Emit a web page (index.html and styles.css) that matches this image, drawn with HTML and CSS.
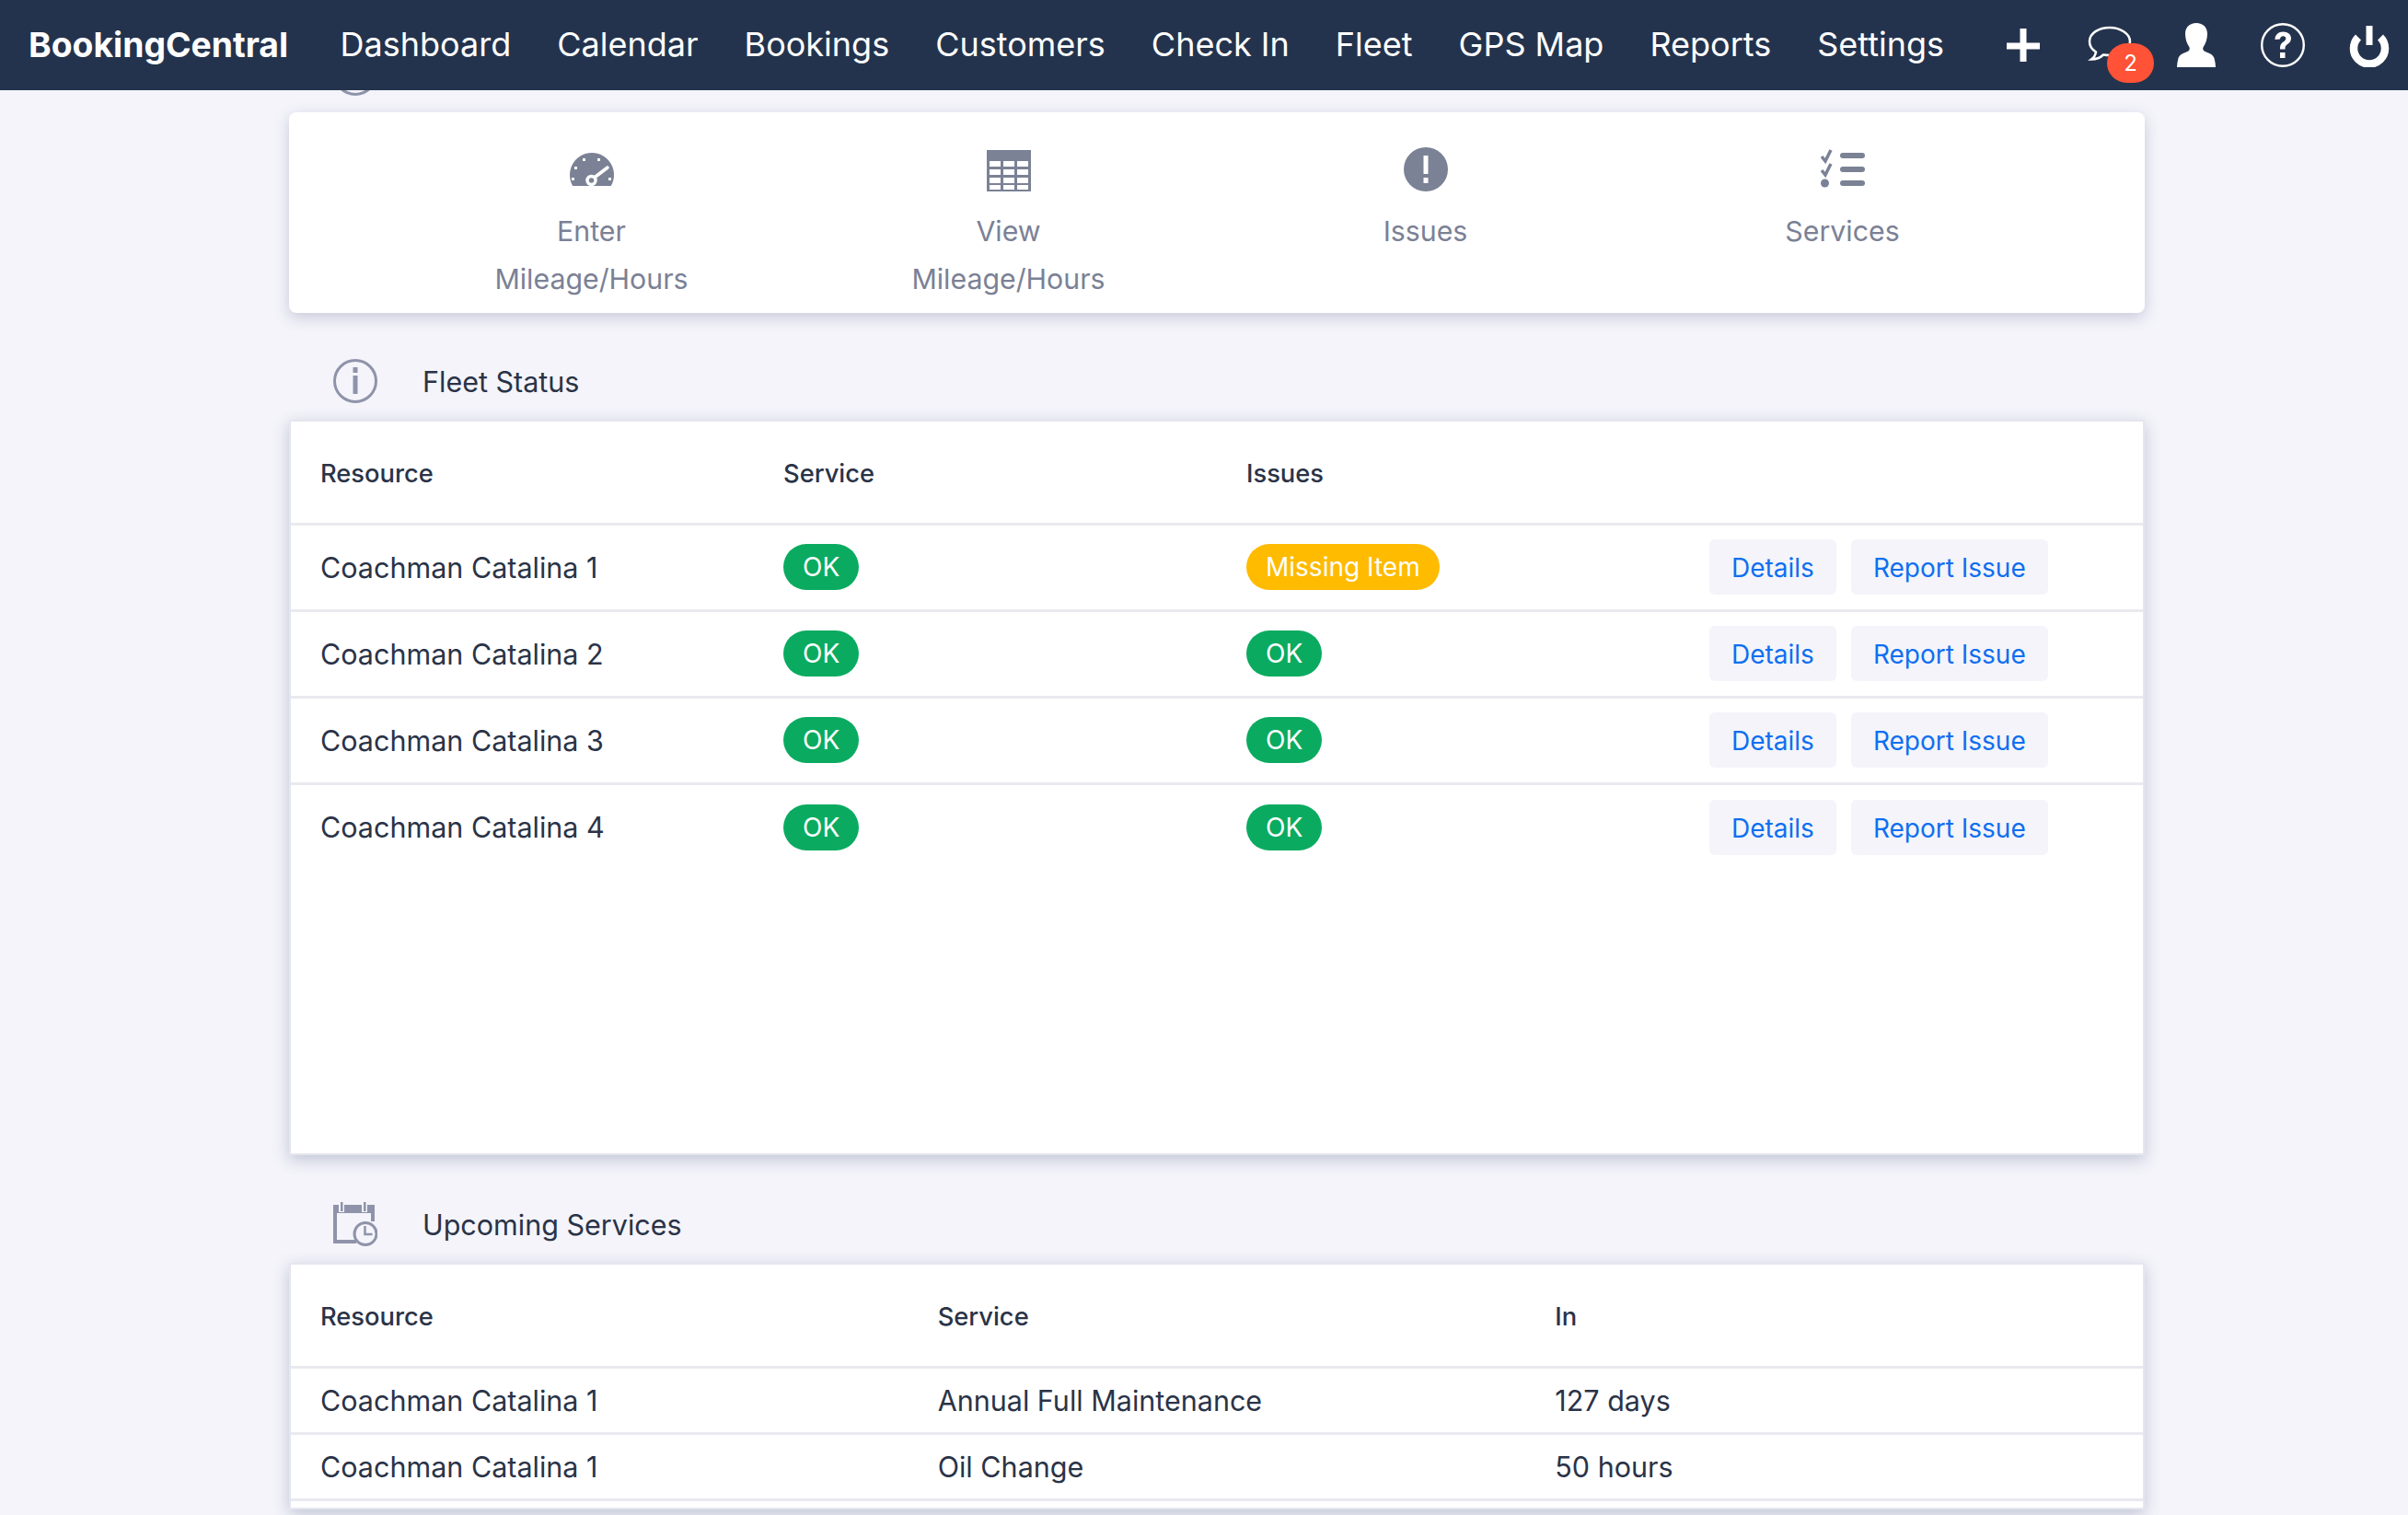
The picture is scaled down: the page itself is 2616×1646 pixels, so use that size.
FILE: index.html
```html
<!DOCTYPE html>
<html lang="en">
<head>
<meta charset="utf-8">
<title>BookingCentral</title>
<link rel="stylesheet" href="styles.css">
</head>
<body>
<nav class="topbar">
  <a class="brand">BookingCentral</a>
  <a class="nav-link">Dashboard</a>
  <a class="nav-link">Calendar</a>
  <a class="nav-link">Bookings</a>
  <a class="nav-link">Customers</a>
  <a class="nav-link">Check In</a>
  <a class="nav-link">Fleet</a>
  <a class="nav-link">GPS Map</a>
  <a class="nav-link">Reports</a>
  <a class="nav-link">Settings</a>
  <div class="nav-icons">
    <svg class="nav-icon" viewBox="0 0 48 48"><path d="M20.500 6h7v15.500H42v7H27.500V42h-7V28.500H6v-7h14.500z" fill="#fff"/></svg>
    <div class="chat">
      <svg class="nav-icon" viewBox="0 0 48 48"><path d="M24 5C12 5 2 11 2 20c0 5 3 9 7 11.500-.5 3-2 6-5 8 5 0 10-2 13-5 2 .4 4.500.5 7 .5 12 0 22-7 22-15S36 5 24 5z" fill="none" stroke="#fff" stroke-width="2.500"/></svg>
      <span class="chat-badge">2</span>
    </div>
    <svg class="nav-icon" viewBox="0 0 48 48"><path d="M24 0c7.500 0 12 5 12 11.500 0 6-1.800 11-4.300 14.500-.8 1.200-.7 3.500 1 4.500 5.500 2.500 9.800 3.500 11 8.500.8 3 1.200 6 1.300 9H3c.1-3 .5-6 1.300-9 1.200-5 5.500-6 11-8.500 1.700-1 1.800-3.300 1-4.500C13.800 22.500 12 17.500 12 11.500 12 5 16.500 0 24 0z" fill="#fff"/></svg>
    <svg class="nav-icon" viewBox="0 0 48 48"><circle cx="24" cy="24" r="22.800" fill="none" stroke="#fff" stroke-width="2.400"/><path d="M15.500 18c0-5.500 4-8.500 8.800-8.500 5.200 0 8.700 3 8.700 7.300 0 3-1.700 4.700-3.800 6.200-2 1.400-2.700 2.300-2.700 4.500v1h-5.500v-1.500c0-3.300 1.100-4.900 3.500-6.600 1.700-1.200 2.800-2.100 2.800-3.500 0-1.600-1.200-2.700-3-2.700-2 0-3.200 1.300-3.300 3.300z" fill="#fff"/><rect x="21" y="32" width="5.500" height="6" fill="#fff"/></svg>
    <svg class="nav-icon" viewBox="0 0 48 48"><path d="M12 15.500a17 17 0 1 0 24 0" fill="none" stroke="#fff" stroke-width="8.500" stroke-linecap="butt"/><rect x="20.500" y="3" width="7" height="21" fill="#fff"/></svg>
  </div>
</nav>

<main class="content">
  <div class="section-head">
    <svg class="section-icon" viewBox="0 0 48 48"><circle cx="24" cy="24" r="22.500" fill="none" stroke="#8f93aa" stroke-width="3"/></svg>
  </div>

  <section class="shortcuts">
    <a class="shortcut">
      <svg class="shortcut-icon" viewBox="0 0 48 48"><path d="M3.200 42A24 24 0 1 1 44.800 42z" fill="#7b8295"/><g fill="#fff"><rect x="14" y="12" width="3" height="3"/><rect x="30" y="12" width="3" height="3"/><rect x="5" y="21" width="3" height="3"/><rect x="2" y="33" width="3" height="3"/><rect x="42" y="33" width="3" height="3"/></g><path d="M24 35 L41 22" stroke="#fff" stroke-width="3.500" stroke-linecap="round"/><circle cx="23.500" cy="36" r="4.500" fill="#7b8295" stroke="#fff" stroke-width="3.500"/></svg>
      <span class="shortcut-label">Enter<br>Mileage/Hours</span>
    </a>
    <a class="shortcut">
      <svg class="shortcut-icon" viewBox="0 0 48 48"><rect y="3" width="48" height="45" fill="#7b8295"/><g fill="#fff"><rect x="3" y="15" width="12" height="6"/><rect x="18" y="15" width="12" height="6"/><rect x="33" y="15" width="12" height="6"/><rect x="3" y="24" width="12" height="6"/><rect x="18" y="24" width="12" height="6"/><rect x="33" y="24" width="12" height="6"/><rect x="3" y="33" width="12" height="6"/><rect x="18" y="33" width="12" height="6"/><rect x="33" y="33" width="12" height="6"/><rect x="3" y="41" width="12" height="5"/><rect x="18" y="41" width="12" height="5"/><rect x="33" y="41" width="12" height="5"/></g></svg>
      <span class="shortcut-label">View<br>Mileage/Hours</span>
    </a>
    <a class="shortcut">
      <svg class="shortcut-icon" viewBox="0 0 48 48"><circle cx="24" cy="24" r="24" fill="#7b8295"/><rect x="21.500" y="9" width="5" height="20" fill="#fff"/><rect x="21.500" y="33" width="5" height="6" fill="#fff"/></svg>
      <span class="shortcut-label">Issues</span>
    </a>
    <a class="shortcut">
      <svg class="shortcut-icon" viewBox="0 0 48 48"><g fill="#7b8295"><rect x="21" y="6" width="27" height="6" rx="3"/><rect x="21" y="21" width="27" height="6" rx="3"/><rect x="21" y="36" width="27" height="6" rx="3"/><circle cx="4.500" cy="39" r="4.500"/></g><path d="M1 10l4 5 6-12M1 25l4 5 6-12" fill="none" stroke="#7b8295" stroke-width="3.500"/></svg>
      <span class="shortcut-label">Services</span>
    </a>
  </section>

  <div class="section-head">
    <svg class="section-icon" viewBox="0 0 48 48"><circle cx="24" cy="24" r="22.500" fill="none" stroke="#8f93aa" stroke-width="3"/><rect x="21.500" y="9" width="5" height="6" fill="#8f93aa"/><rect x="21.500" y="18" width="5" height="20" fill="#8f93aa"/></svg>
    <h2 class="section-title">Fleet Status</h2>
  </div>

  <section class="panel panel-fleet">
    <table class="data-table fleet-table">
      <thead>
        <tr><th>Resource</th><th>Service</th><th>Issues</th><th></th></tr>
      </thead>
      <tbody>
        <tr>
          <td>Coachman Catalina 1</td>
          <td><span class="pill pill-ok">OK</span></td>
          <td><span class="pill pill-warn">Missing Item</span></td>
          <td><div class="actions"><a class="btn">Details</a><a class="btn">Report Issue</a></div></td>
        </tr>
        <tr>
          <td>Coachman Catalina 2</td>
          <td><span class="pill pill-ok">OK</span></td>
          <td><span class="pill pill-ok">OK</span></td>
          <td><div class="actions"><a class="btn">Details</a><a class="btn">Report Issue</a></div></td>
        </tr>
        <tr>
          <td>Coachman Catalina 3</td>
          <td><span class="pill pill-ok">OK</span></td>
          <td><span class="pill pill-ok">OK</span></td>
          <td><div class="actions"><a class="btn">Details</a><a class="btn">Report Issue</a></div></td>
        </tr>
        <tr class="last-row">
          <td>Coachman Catalina 4</td>
          <td><span class="pill pill-ok">OK</span></td>
          <td><span class="pill pill-ok">OK</span></td>
          <td><div class="actions"><a class="btn">Details</a><a class="btn">Report Issue</a></div></td>
        </tr>
      </tbody>
    </table>
  </section>

  <div class="section-head section-head-lower">
    <svg class="section-icon" viewBox="0 0 48 48"><g fill="#8f93aa"><rect y="3" width="45" height="9"/><rect y="3" width="4" height="42"/><rect x="41" y="3" width="4" height="18"/><rect y="41" width="25" height="4"/></g><rect x="6" y="0" width="6" height="11" fill="#f4f4fa"/><rect x="31" y="0" width="6" height="11" fill="#f4f4fa"/><rect x="8" y="0" width="2.500" height="10" fill="#8f93aa"/><rect x="33" y="0" width="2.500" height="10" fill="#8f93aa"/><circle cx="35" cy="34.500" r="12" fill="#f4f4fa" stroke="#8f93aa" stroke-width="3"/><path d="M34.500 26v9h8" fill="none" stroke="#8f93aa" stroke-width="2.500"/></svg>
    <h2 class="section-title">Upcoming Services</h2>
  </div>

  <section class="panel panel-upcoming">
    <table class="data-table upcoming-table">
      <thead>
        <tr><th>Resource</th><th>Service</th><th>In</th></tr>
      </thead>
      <tbody>
        <tr><td>Coachman Catalina 1</td><td>Annual Full Maintenance</td><td>127 days</td></tr>
        <tr><td>Coachman Catalina 1</td><td>Oil Change</td><td>50 hours</td></tr>
      </tbody>
    </table>
  </section>
</main>
</body>
</html>
```

FILE: styles.css
```css
* { box-sizing: border-box; }

html, body {
  margin: 0;
  height: 1646px;
  overflow: hidden;
}

body {
  background: #f4f4fa;
  color: #2a3347;
  font-family: Inter, "Liberation Sans", sans-serif;
}

.topbar {
  position: fixed;
  top: 0;
  left: 0;
  right: 0;
  z-index: 10;
  height: 98px;
  background: #24334d;
  display: flex;
  align-items: center;
  padding-left: 31px;
  color: #fff;
  font-size: 36px;
  gap: 50px;
  white-space: nowrap;
}

.brand,
.nav-link {
  padding-bottom: 2px;
}

.brand {
  font-size: 37.300px;
  font-weight: 700;
  margin-right: 6.500px;
}

.nav-icons {
  margin-left: auto;
  display: flex;
  align-items: center;
  gap: 46px;
  padding-right: 18px;
}

.nav-icon {
  display: block;
  width: 48px;
  height: 48px;
}

.chat {
  position: relative;
  width: 48px;
  height: 48px;
}

.chat-badge {
  position: absolute;
  left: 21px;
  top: 22px;
  width: 51px;
  height: 43px;
  border-radius: 22px;
  background: #ff5236;
  font-size: 24px;
  line-height: 43px;
  text-align: center;
}

.content {
  width: 2016px;
  margin-left: 314px;
  padding-top: 56px;
}

.section-head {
  display: flex;
  align-items: center;
  gap: 49px;
  height: 48px;
  margin: 0 0 18px 48px;
}

.section-head-lower { margin-top: 51px; }

.section-icon {
  flex: none;
  width: 48px;
  height: 48px;
}

.section-title {
  margin: 0;
  font-size: 30.500px;
  font-weight: 400;
  color: #2a3347;
}

.shortcuts {
  height: 218px;
  margin-bottom: 50px;
  background: #fff;
  border-radius: 8px;
  box-shadow: 0 5px 16px rgba(70, 80, 125, .26);
  display: grid;
  grid-template-columns: repeat(4, 453px);
  justify-content: center;
  padding-top: 38px;
}

.shortcut {
  display: flex;
  flex-direction: column;
  align-items: center;
  text-align: center;
}

.shortcut-icon {
  width: 48px;
  height: 48px;
  flex: none;
}

.shortcut-label {
  margin-top: 17px;
  font-size: 30.300px;
  line-height: 52px;
  color: #7b8195;
}

.panel {
  background: #fff;
  border: 2px solid #e6e6ee;
  box-shadow: 0 5px 16px rgba(70, 85, 130, .3);
}

.panel-fleet { height: 799px; }

.panel-upcoming {
  height: 268px;
  overflow: hidden;
}

.data-table {
  width: 100%;
  border-collapse: collapse;
  table-layout: fixed;
}

.data-table th {
  height: 111px;
  padding: 3px 0 0 32px;
  text-align: left;
  font-size: 27.300px;
  font-weight: 500;
  border-bottom: 3px solid #e9e9f0;
}

.data-table td {
  padding: 0 0 0 32px;
  font-size: 30.500px;
  border-bottom: 3px solid #e9e9f0;
}

.fleet-table td { height: 94px; }

.fleet-table .last-row td { border-bottom: 0; }

.upcoming-table td { height: 72px; }

.pill {
  display: inline-block;
  height: 50px;
  padding: 0 21px;
  border-radius: 25px;
  color: #fff;
  font-size: 28px;
  line-height: 50px;
  vertical-align: middle;
}

.pill-ok { background: #0aab60; }

.pill-warn { background: #ffbb00; }

.actions {
  display: flex;
  gap: 16px;
}

.btn {
  height: 60px;
  padding: 0 24px;
  border-radius: 6px;
  background: #f4f4fa;
  color: #0f6ff0;
  font-size: 28px;
  line-height: 62px;
  white-space: nowrap;
}
```
